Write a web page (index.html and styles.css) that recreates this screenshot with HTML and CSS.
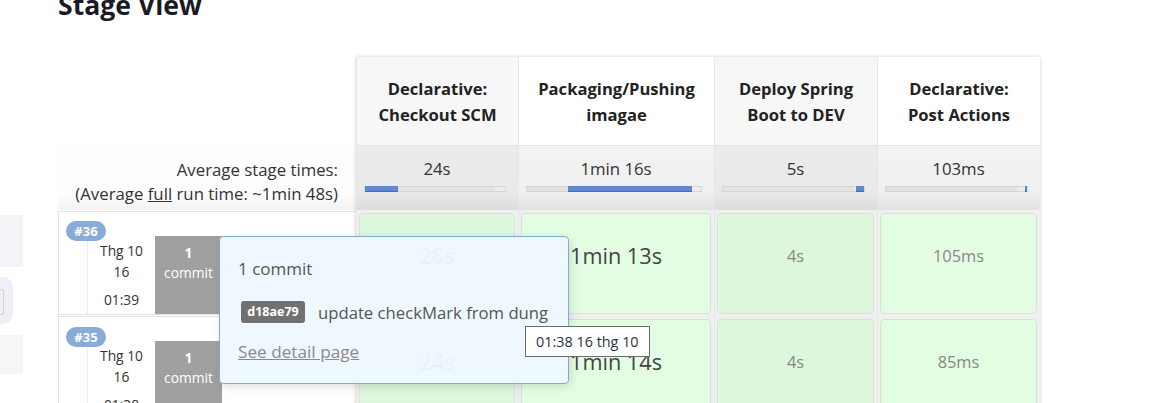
FILE: index.html
```html
<!DOCTYPE html>
<html lang="en">
<head>
<meta charset="utf-8">
<title>Stage View</title>
<link rel="stylesheet" href="styles.css">
</head>
<body>
<div class="page">
  <aside class="side">
    <div class="side-a"></div>
    <div class="side-b"><div class="side-b-inner"></div></div>
    <div class="side-c"></div>
  </aside>
  <main class="main">
    <h2 class="title">Stage View</h2>
    <div class="stage">
      <div class="labels">
        <div class="head-blank"></div>
        <div class="avg-label">Average stage times:<br>(Average <u>full</u> run time: ~1min 48s)</div>
        <div class="build">
          <span class="badge">#36</span>
          <div class="build-info">
            <div class="date">
              <div class="line">Thg 10</div>
              <div class="line">16</div>
              <div class="line time">01:39</div>
            </div>
            <div class="commits">
              <div class="num">1</div>
              <div class="word">commit</div>
            </div>
          </div>
        </div>
        <div class="build second">
          <span class="badge">#35</span>
          <div class="build-info">
            <div class="date">
              <div class="line">Thg 10</div>
              <div class="line">16</div>
              <div class="line time">01:38</div>
            </div>
            <div class="commits">
              <div class="num">1</div>
              <div class="word">commit</div>
            </div>
          </div>
        </div>
      </div>
      <div class="stages">
        <div class="col odd w1">
          <div class="head">Declarative:<br>Checkout SCM</div>
          <div class="avg">
            <div class="avg-time">24s</div>
            <div class="bar"><span class="fill" style="left:0%;width:23.6%"></span></div>
          </div>
          <div class="cellwrap"><div class="cell big">26s</div></div>
          <div class="cellwrap"><div class="cell big">24s</div></div>
        </div>
        <div class="col even w2">
          <div class="head">Packaging/Pushing<br>imagae</div>
          <div class="avg">
            <div class="avg-time">1min 16s</div>
            <div class="bar"><span class="fill" style="left:23.3%;width:71.6%"></span></div>
          </div>
          <div class="cellwrap"><div class="cell big">1min 13s</div></div>
          <div class="cellwrap"><div class="cell big">1min 14s</div></div>
        </div>
        <div class="col odd w3">
          <div class="head">Deploy Spring<br>Boot to DEV</div>
          <div class="avg">
            <div class="avg-time">5s</div>
            <div class="bar"><span class="fill" style="left:94.4%;width:5.6%"></span></div>
          </div>
          <div class="cellwrap"><div class="cell">4s</div></div>
          <div class="cellwrap"><div class="cell">4s</div></div>
        </div>
        <div class="col even w3">
          <div class="head">Declarative:<br>Post Actions</div>
          <div class="avg">
            <div class="avg-time">103ms</div>
            <div class="bar"><span class="fill" style="left:98.6%;width:1.4%"></span></div>
          </div>
          <div class="cellwrap"><div class="cell">105ms</div></div>
          <div class="cellwrap"><div class="cell">85ms</div></div>
        </div>
      </div>
    </div>

    <div class="popup">
      <div class="popup-title">1 commit</div>
      <div class="popup-commit">
        <span class="sha">d18ae79</span>
        <span class="msg">update checkMark from dung</span>
      </div>
      <a class="popup-link" href="#">See detail page</a>
    </div>
    <div class="tip">01:38 16 thg 10</div>
  </main>
</div>
</body>
</html>
```
FILE: styles.css
```css
html, body {
  margin: 0;
  padding: 0;
  background: #fff;
}
body {
  width: 1162px;
  height: 403px;
  overflow: hidden;
  font-family: "Open Sans", "Noto Sans", sans-serif;
  color: #333;
}
.page {
  display: flex;
  position: relative;
  height: 403px;
}
.side {
  width: 23px;
  flex: none;
  padding-top: 215px;
  box-sizing: border-box;
}
.side-a {
  height: 52px;
  background: #f3f3f8;
}
.side-b {
  margin-top: 10px;
  width: 13px;
  height: 47px;
  background: #efeff7;
  border-radius: 0 10px 10px 0;
  padding-top: 12px;
  box-sizing: border-box;
}
.side-b-inner {
  width: 3px;
  height: 24px;
  border: 1px solid #cfcfd8;
  border-left: none;
  border-radius: 0 3px 3px 0;
}
.side-c {
  margin-top: 11px;
  height: 39px;
  background: #f6f6f9;
}
.main {
  flex: 1;
  padding-left: 35px;
}
.title {
  margin: -11px 0 0;
  font-size: 26.6px;
  line-height: 32px;
  font-weight: 700;
  color: #1a1a26;
}
.stage {
  margin-top: 36px;
  display: flex;
}
.labels {
  width: 298px;
  flex: none;
}
.head-blank {
  height: 89px;
}
.avg-label {
  height: 64px;
  box-sizing: border-box;
  padding: 12px 18px 0 0;
  text-align: right;
  font-size: 16.8px;
  line-height: 24px;
  color: #333;
  background: linear-gradient(to bottom, #fefefe 0%, #fdfdfd 75%, #f3f3f3 100%);
}
.build {
  margin: 1px 0 1px;
  height: 104px;
  box-sizing: border-box;
  border: 1px solid #e4e4e4;
  border-right: none;
  padding: 9px 0 0 7px;
  display: flex;
  flex-direction: column;
  align-items: flex-start;
}
.build.second {
  padding-top: 10px;
}
.badge {
  position: relative;
  z-index: 1;
  display: block;
  width: 40px;
  height: 20px;
  border-radius: 10px;
  background: #88acd5;
  color: #fff;
  font-size: 13px;
  font-weight: 700;
  line-height: 20px;
  text-align: center;
}
.build-info {
  margin: -5px 0 0 21px;
  flex: 1;
  display: flex;
}
.build.second .build-info {
  margin-top: -6px;
}
.date {
  width: 68px;
  box-sizing: border-box;
  border-left: 1px solid #ececec;
  padding-top: 4px;
  text-align: center;
  font-size: 13.8px;
  line-height: 21px;
  color: #333;
}
.date .time {
  margin-top: 7px;
}
.commits {
  width: 67px;
  background: #a0a0a0;
  color: #fff;
  text-align: center;
  padding-top: 7px;
  box-sizing: border-box;
  font-size: 13.8px;
  line-height: 20px;
}
.commits .num {
  font-weight: 700;
}
.stages {
  display: flex;
  box-shadow: 0 0 4px rgba(0, 0, 0, 0.18);
}
.col {
  box-sizing: border-box;
  border-left: 1px solid #e6e6e6;
  background: #f0f0f0;
}
.w1 { width: 162px; }
.w2 { width: 196px; }
.w3 { width: 163px; }
.head {
  height: 89px;
  box-sizing: border-box;
  border-bottom: 1px solid #e2e2e2;
  display: flex;
  align-items: center;
  justify-content: center;
  text-align: center;
  font-size: 16.6px;
  line-height: 26px;
  font-weight: 700;
  color: #222;
  padding-top: 1px;
}
.odd .head { background: #f7f7f7; }
.even .head { background: #fff; }
.avg {
  height: 64px;
  box-sizing: border-box;
  padding: 11px 12px 0 7px;
}
.odd .avg { background: linear-gradient(to bottom, #ebebeb 0%, #e9e9e9 72%, #dcdcdc 100%); }
.even .avg { background: linear-gradient(to bottom, #f2f2f2 0%, #f0f0f0 72%, #e2e2e2 100%); }
.avg-time {
  text-align: center;
  font-size: 16.8px;
  line-height: 24px;
  color: #333;
  padding-left: 4px;
}
.bar {
  position: relative;
  margin-top: 5px;
  height: 6px;
  box-sizing: border-box;
  border: 1px solid #d6d6d6;
  background: linear-gradient(to right, #e2e2e2 0%, #e2e2e2 93%, #ebebeb 93%);
}
.fill {
  position: absolute;
  top: -1px;
  bottom: -1px;
  background: #5b8ad0;
  border-bottom: 1px solid #3f6fbf;
  box-sizing: border-box;
}
.cellwrap {
  height: 106px;
  box-sizing: border-box;
  padding: 3px 3px 2px 2px;
}
.cell {
  height: 100%;
  box-sizing: border-box;
  border: 1px solid #d8e2d8;
  border-radius: 4px;
  text-align: center;
  padding-top: 30px;
  font-size: 16.4px;
  line-height: 24px;
  color: #888;
}
.odd .cell { background: #ddf7dd; }
.even .cell { background: #e3fde3; }
.cell.big {
  padding-top: 27px;
  font-size: 21.7px;
  line-height: 30px;
  color: #444;
}
.popup {
  position: absolute;
  left: 219px;
  top: 236px;
  width: 350px;
  height: 148px;
  box-sizing: border-box;
  border: 1px solid #82a9d8;
  border-radius: 4px;
  background: rgba(239, 248, 255, 0.965);
  box-shadow: 2px 3px 8px rgba(0, 0, 0, 0.12);
  padding: 20px 0 0 18px;
  z-index: 5;
}
.popup-title {
  font-size: 17px;
  line-height: 24px;
  color: #555;
}
.popup-commit {
  margin-top: 20px;
  display: flex;
  align-items: center;
  height: 22px;
}
.sha {
  margin-left: 3px;
  width: 64px;
  height: 22px;
  border-radius: 3px;
  background: #717171;
  color: #fff;
  font-size: 12.5px;
  font-weight: 700;
  line-height: 22px;
  text-align: center;
}
.msg {
  margin-left: 13px;
  font-size: 16.7px;
  color: #555;
  white-space: nowrap;
}
.popup-link {
  display: inline-block;
  margin-top: 17px;
  font-size: 17.2px;
  line-height: 24px;
  color: #8a8a8a;
  text-decoration: underline;
}
.tip {
  position: absolute;
  left: 525px;
  top: 326px;
  width: 125px;
  height: 31px;
  box-sizing: border-box;
  border: 1px solid #6b6b6b;
  background: #fff;
  padding-left: 10px;
  font-size: 14.4px;
  line-height: 29px;
  color: #2b3340;
  z-index: 6;
}
```
